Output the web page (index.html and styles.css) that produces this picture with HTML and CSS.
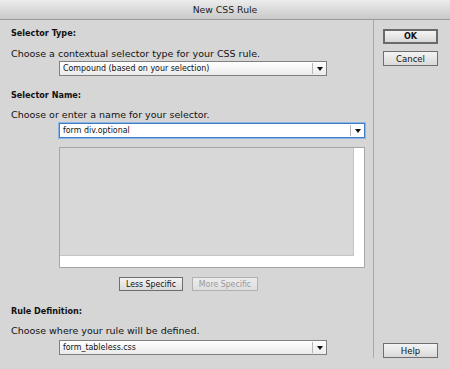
FILE: index.html
```html
<!DOCTYPE html>
<html>
<head>
<meta charset="utf-8">
<link rel="stylesheet" href="styles.css">
</head>
<body>
<div class="window">
  <div class="titlebar">New CSS Rule</div>
  <div class="main">
    <div class="left">
      <div class="label l1">Selector Type:</div>
      <div class="desc d1">Choose a contextual selector type for your CSS rule.</div>
      <div class="select s1"><span class="val">Compound (based on your selection)</span><span class="arrow"></span></div>
      <div class="label l2">Selector Name:</div>
      <div class="desc d2">Choose or enter a name for your selector.</div>
      <div class="select focus s2"><span class="val">form div.optional</span><span class="arrow"></span></div>
      <div class="listbox"><div class="listinner"></div></div>
      <div class="btnrow">
        <div class="btn less">Less Specific</div>
        <div class="btn more disabled">More Specific</div>
      </div>
      <div class="label l3">Rule Definition:</div>
      <div class="desc d3">Choose where your rule will be defined.</div>
      <div class="select s3"><span class="val">form_tableless.css</span><span class="arrow"></span></div>
    </div>
    <div class="divider"></div>
    <div class="right">
      <div class="btn side ok">OK</div>
      <div class="btn side cancel">Cancel</div>
      <div class="spacer"></div>
      <div class="btn side help">Help</div>
    </div>
  </div>
</div>
</body>
</html>
```
FILE: styles.css
```css
html, body {
  margin: 0;
  padding: 0;
  background: #d6d6d6;
}
.window {
  width: 450px;
  height: 369px;
  background: #d6d6d6;
  font-family: "DejaVu Sans", sans-serif;
  font-size: 9.5px;
  color: #111;
  overflow: hidden;
}
.titlebar {
  height: 20px;
  box-sizing: border-box;
  border-bottom: 1px solid #9a9a9a;
  background: linear-gradient(#ececec, #c9c9c9);
  text-align: center;
  font-size: 9.3px;
  line-height: 20px;
  color: #222;
}
.main {
  display: flex;
  height: 349px;
}
.left {
  width: 362px;
  padding-left: 11px;
}
.label {
  height: 13px;
  line-height: 13px;
  font-weight: bold;
  font-family: "DejaVu Sans Condensed", "DejaVu Sans", sans-serif;
  font-stretch: condensed;
  font-size: 9px;
}
.desc {
  height: 13px;
  line-height: 13px;
}
.l1 { margin-top: 7px; }
.d1 { margin-top: 7px; }
.l2 { margin-top: 13px; }
.d2 { margin-top: 6px; }
.s2 { margin-top: 2px; }
.l3 { margin-top: 14px; }
.d3 { margin-top: 6px; }
.select {
  display: flex;
  margin-left: 48px;
  width: 268px;
  height: 15px;
  box-sizing: border-box;
  border: 1px solid #808080;
  background: linear-gradient(#ffffff, #ebebeb);
  line-height: 13px;
  font-family: "DejaVu Sans Condensed", "DejaVu Sans", sans-serif;
  font-stretch: condensed;
  font-size: 8.8px;
}
.s1 { margin-top: 1px; }
.s2 { width: 306px; }
.s3 { margin-top: 3px; }
.select .val {
  flex: 1;
  padding-left: 3px;
}
.select .arrow {
  width: 13px;
  border-left: 1px solid #b5b5b5;
  margin: 1px 0;
  position: relative;
}
.select .arrow::after {
  content: "";
  position: absolute;
  left: 4px;
  top: 4px;
  border-left: 3px solid transparent;
  border-right: 3px solid transparent;
  border-top: 4px solid #111;
}
.select.focus {
  border: 1px solid #3f7cc4;
  box-shadow: 0 0 0 1px #8eb6e6;
  background: #fff;
}
.listbox {
  margin-top: 9px;
  margin-left: 48px;
  width: 306px;
  height: 121px;
  box-sizing: border-box;
  border: 1px solid #a6a6a6;
  background: #fff;
}
.listinner {
  width: 294px;
  height: 108px;
  background: #d8d8d8;
  border-right: 1px solid #c4c4c4;
  border-bottom: 1px solid #c4c4c4;
  box-sizing: border-box;
}
.btnrow {
  display: flex;
  gap: 9px;
  margin-top: 9px;
  margin-left: 108px;
}
.btn {
  height: 14px;
  box-sizing: border-box;
  border: 1px solid #6e6e6e;
  background: linear-gradient(#f4f4f4, #d9d9d9);
  text-align: center;
  line-height: 12px;
  font-family: "DejaVu Sans Condensed", "DejaVu Sans", sans-serif;
  font-stretch: condensed;
  font-size: 8.7px;
}
.less { width: 64px; }
.more { width: 66px; }
.btn.disabled {
  color: #9a9a9a;
  border-color: #b0b0b0;
  background: linear-gradient(#ececec, #dedede);
}
.divider {
  width: 1px;
  background: #a9a9a9;
  margin-bottom: 11px;
}
.right {
  display: flex;
  flex-direction: column;
  padding-left: 9px;
  padding-top: 9px;
  padding-bottom: 11px;
}
.btn.side {
  width: 55px;
  height: 15px;
  line-height: 13px;
  font-size: 9.5px;
}
.ok {
  border: 2px solid #6a6a6a;
  line-height: 11px !important;
  font-weight: bold;
  font-size: 9px !important;
}
.cancel { margin-top: 7px; }
.spacer { flex: 1; }
```
